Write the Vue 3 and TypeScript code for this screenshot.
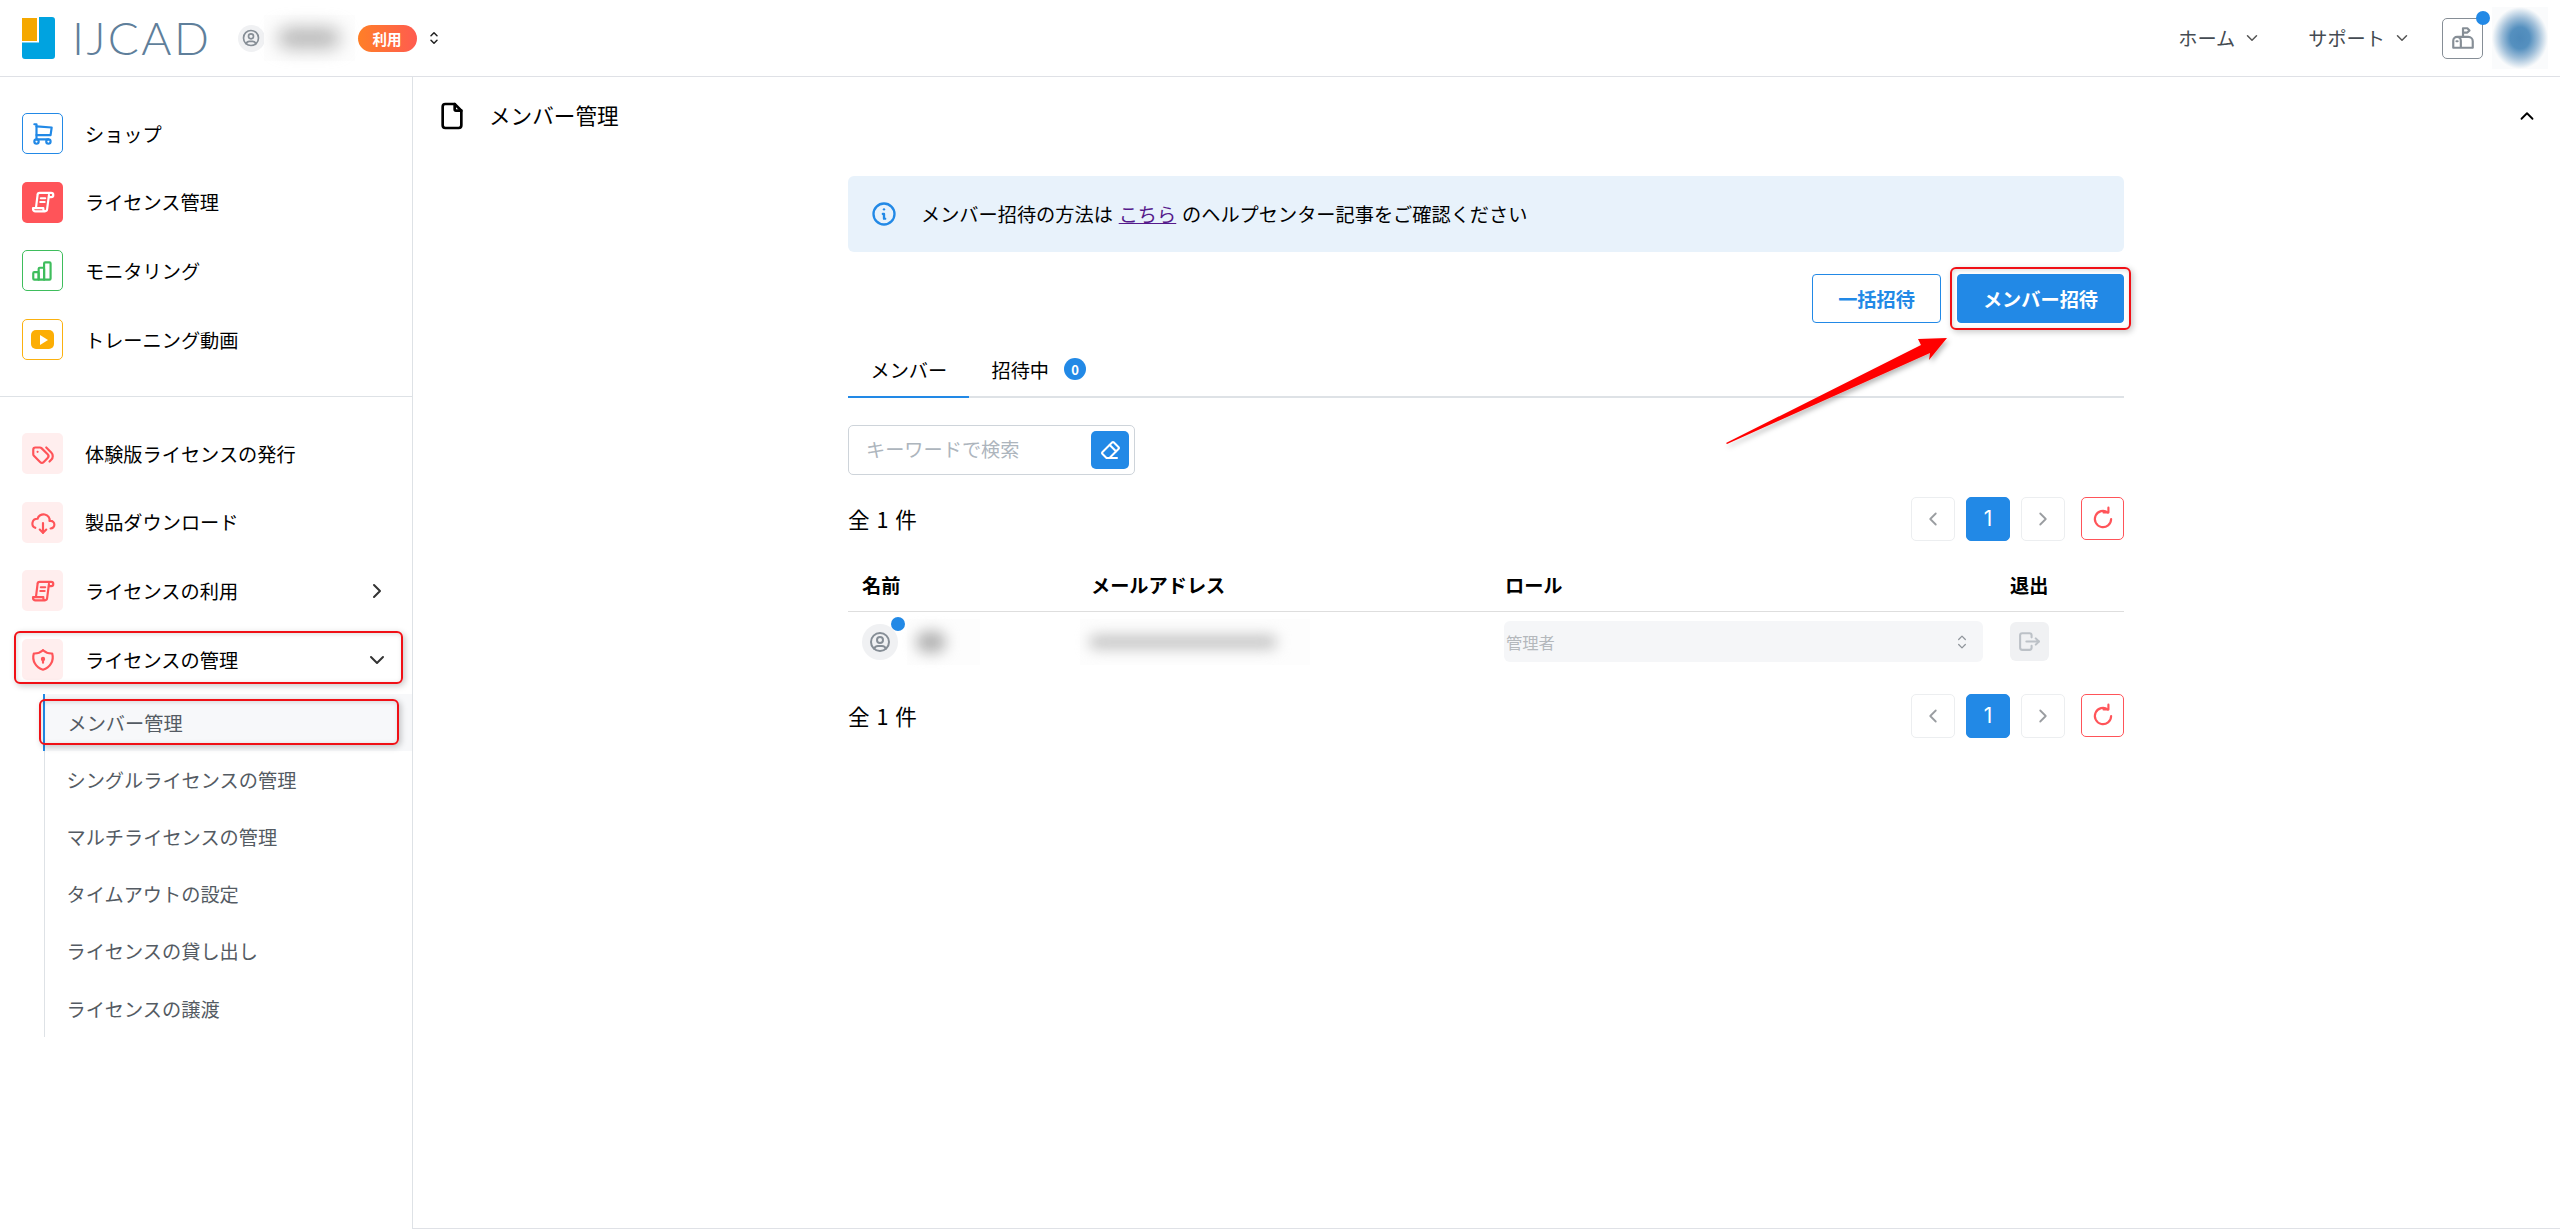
<script setup lang="ts">
type Icon = string[]
const I: Record<string, Icon> = {
  cart: ['M17 17h-11v-14h-2', 'M6 5l14 1l-1 7h-13', 'M4 19a2 2 0 1 0 4 0a2 2 0 1 0 -4 0', 'M15 19a2 2 0 1 0 4 0a2 2 0 1 0 -4 0'],
  scroll: ['M5.500 17.500L7 5.500a2 2 0 0 1 2-2H19.500a2 2 0 0 1 0 4H17.500', 'M17.500 5.500L15.800 18.500a2.200 2.200 0 0 1-2.200 2.100H5a2.200 2.200 0 0 1-2.200-2v-1h9.500v1.200a2 2 0 0 0 1.500 1.800', 'M10 8.500h4', 'M9.500 12h4'],
  bars: ['M3 14a1 1 0 0 1 1-1h3a1 1 0 0 1 1 1v6H4a1 1 0 0 1-1-1z', 'M8 20V10a1 1 0 0 1 1-1h3a1 1 0 0 1 1 1v10z', 'M13 20V5a1 1 0 0 1 1-1h4a1 1 0 0 1 1 1v14a1 1 0 0 1-1 1z'],
  tags: ['M3 8v4.172a2 2 0 0 0 .586 1.414l5.71 5.71a2.41 2.41 0 0 0 3.408 0l3.592 -3.592a2.41 2.41 0 0 0 0 -3.408l-5.71 -5.71a2 2 0 0 0 -1.414 -.586h-4.172a2 2 0 0 0 -2 2z', 'M18 19l1.592 -1.592a4.82 4.82 0 0 0 0 -6.816l-4.592 -4.592', 'M7 10h-.01'],
  cloud: ['M19 18a3.500 3.500 0 0 0 0 -7h-1a5 4.500 0 0 0 -11 -2a4.600 4.400 0 0 0 -2.100 8.400', 'M12 13l0 9', 'M9 19l3 3l3 -3'],
  shield: ['M12 3a12 12 0 0 0 8.500 3a12 12 0 0 1 -8.500 15a12 12 0 0 1 -8.500 -15a12 12 0 0 0 8.500 -3', 'M12 11m-1 0a1 1 0 1 0 2 0a1 1 0 1 0 -2 0', 'M12 12l0 2.500'],
  user: ['M3 12a9 9 0 1 0 18 0a9 9 0 1 0 -18 0', 'M9 10a3 3 0 1 0 6 0a3 3 0 1 0 -6 0', 'M6.168 18.849a4 4 0 0 1 3.832 -2.849h4a4 4 0 0 1 3.834 2.855'],
  selector: ['M8 9l4 -4l4 4', 'M16 15l-4 4l-4 -4'],
  down: ['M6 9l6 6l6 -6'],
  up: ['M6 15l6 -6l6 6'],
  left: ['M15 6l-6 6l6 6'],
  right: ['M9 6l6 6l-6 6'],
  mailbox: ['M10 21v-6.500a3.500 3.500 0 0 0 -7 0v6.500h18v-6a4 4 0 0 0 -4 -4h-10.500', 'M12 11v-8h4l2 2l-2 2h-4', 'M6 15h1'],
  file: ['M14 3v4a1 1 0 0 0 1 1h4', 'M17 21h-10a2 2 0 0 1 -2 -2v-14a2 2 0 0 1 2 -2h7l5 5v11a2 2 0 0 1 -2 2'],
  info: ['M3 12a9 9 0 1 0 18 0a9 9 0 1 0 -18 0', 'M12 8h.01', 'M11 12h1v4h1'],
  eraser: ['M19 20h-10.500l-4.210 -4.300a1 1 0 0 1 0 -1.410l10 -10a1 1 0 0 1 1.410 0l5 5a1 1 0 0 1 0 1.410l-9.200 9.300', 'M18 13.300l-6.300 -6.300'],
  refresh: ['M19.500 12a7.500 7.500 0 1 1 -3 -6', 'M17 1.500v4.500h-4.500'],
  logout: ['M14 8v-2a2 2 0 0 0 -2 -2h-7a2 2 0 0 0 -2 2v12a2 2 0 0 0 2 2h7a2 2 0 0 0 2 -2v-2', 'M9 12h12l-3 -3', 'M18 15l3 -3'],
}

const primaryMenu = [
  { label: 'ショップ', icon: I.cart, box: 'box-blue' },
  { label: 'ライセンス管理', icon: I.scroll, box: 'box-red' },
  { label: 'モニタリング', icon: I.bars, box: 'box-green' },
  { label: 'トレーニング動画', icon: null, box: 'box-yellow' },
]
const secondaryMenu = [
  { label: '体験版ライセンスの発行', icon: I.tags, arrow: null },
  { label: '製品ダウンロード', icon: I.cloud, arrow: null },
  { label: 'ライセンスの利用', icon: I.scroll, arrow: I.right },
  { label: 'ライセンスの管理', icon: I.shield, arrow: I.down },
]
const subMenu = ['メンバー管理', 'シングルライセンスの管理', 'マルチライセンスの管理', 'タイムアウトの設定', 'ライセンスの貸し出し', 'ライセンスの譲渡']
</script>

<template>
  <div class="page">
    <header class="topbar">
      <div class="brand">
        <svg class="logo-mark" viewBox="0 0 33 42" width="33" height="42">
          <path fill="#00a3e0" d="M17 0h13a3 3 0 0 1 3 3v36a3 3 0 0 1-3 3H3a3 3 0 0 1-3-3V25.500h17z" />
          <path fill="#f5a800" d="M0 1h15v23H0z" />
        </svg>
        <span class="logo-text">IJCAD</span>
      </div>
      <span class="round-user">
        <svg viewBox="0 0 24 24" width="20" height="20" class="ico"><path v-for="d in I.user" :key="d" :d="d" /></svg>
      </span>
      <span class="smudge-box head-name"><span class="smudge"></span></span>
      <span class="usage-badge">利用</span>
      <svg class="ico head-selector" viewBox="0 0 24 24" width="18" height="18"><path v-for="d in I.selector" :key="d" :d="d" /></svg>

      <nav class="top-right">
        <span class="top-link">ホーム<svg class="ico" viewBox="0 0 24 24" width="18" height="18"><path v-for="d in I.down" :key="d" :d="d" /></svg></span>
        <span class="top-link link-two">サポート<svg class="ico" viewBox="0 0 24 24" width="18" height="18"><path v-for="d in I.down" :key="d" :d="d" /></svg></span>
        <span class="mail-btn">
          <svg class="ico" viewBox="0 0 24 24" width="26" height="26"><path v-for="d in I.mailbox" :key="d" :d="d" /></svg>
          <i class="mail-dot"></i>
        </span>
        <span class="head-avatar"></span>
      </nav>
    </header>

    <div class="body">
      <aside class="sidebar">
        <div class="group group-one">
          <div v-for="m in primaryMenu" :key="m.label" class="menu-item">
            <span class="icon-box" :class="m.box">
              <svg v-if="m.icon" class="ico" viewBox="0 0 24 24" width="26" height="26"><path v-for="d in m.icon" :key="d" :d="d" /></svg>
              <span v-else class="play"><i></i></span>
            </span>
            <span>{{ m.label }}</span>
          </div>
        </div>
        <div class="group group-two">
          <div v-for="m in secondaryMenu" :key="m.label" class="menu-item">
            <span class="icon-box box-pale">
              <svg class="ico" viewBox="0 0 24 24" width="26" height="26"><path v-for="d in m.icon" :key="d" :d="d" /></svg>
            </span>
            <span>{{ m.label }}</span>
            <svg v-if="m.arrow" class="ico menu-arrow" viewBox="0 0 24 24" width="24" height="24"><path v-for="d in m.arrow" :key="d" :d="d" /></svg>
          </div>
        </div>
        <ul class="submenu">
          <li v-for="(s, i) in subMenu" :key="s" :class="{ active: i === 0 }">{{ s }}</li>
        </ul>
      </aside>

      <main class="main">
        <div class="title-row">
          <svg class="ico" viewBox="0 0 24 24" width="32" height="32"><path v-for="d in I.file" :key="d" :d="d" /></svg>
          <span class="title">メンバー管理</span>
          <svg class="ico title-chevron" viewBox="0 0 24 24" width="22" height="22"><path v-for="d in I.up" :key="d" :d="d" /></svg>
        </div>

        <section class="content">
          <div class="alert">
            <svg class="ico" viewBox="0 0 24 24" width="28" height="28"><path v-for="d in I.info" :key="d" :d="d" /></svg>
            <span class="alert-text">メンバー招待の方法は <a class="visited">こちら</a> のヘルプセンター記事をご確認ください</span>
          </div>

          <div class="actions">
            <button class="btn btn-outline">一括招待</button>
            <button class="btn btn-solid">メンバー招待</button>
          </div>

          <div class="tabs">
            <span class="tab tab-active">メンバー</span>
            <span class="tab">招待中<b class="count">0</b></span>
          </div>

          <div class="search">
            <span class="placeholder">キーワードで検索</span>
            <span class="search-btn">
              <svg class="ico" viewBox="0 0 24 24" width="24" height="24"><path v-for="d in I.eraser" :key="d" :d="d" /></svg>
            </span>
          </div>

          <div class="pager-row row-top">
            <span class="total">全 1 件</span>
            <div class="pager">
              <span class="page-btn"><svg class="ico" viewBox="0 0 24 24" width="22" height="22"><path v-for="d in I.left" :key="d" :d="d" /></svg></span>
              <span class="page-btn current">1</span>
              <span class="page-btn"><svg class="ico" viewBox="0 0 24 24" width="22" height="22"><path v-for="d in I.right" :key="d" :d="d" /></svg></span>
              <span class="reload"><svg class="ico" viewBox="0 0 24 24" width="26" height="26"><path v-for="d in I.refresh" :key="d" :d="d" /></svg></span>
            </div>
          </div>

          <div class="table">
            <div class="t-head">
              <span>名前</span><span>メールアドレス</span><span>ロール</span><span>退出</span>
            </div>
            <div class="t-row">
              <div class="cell-name">
                <span class="row-user">
                  <svg class="ico" viewBox="0 0 24 24" width="24" height="24"><path v-for="d in I.user" :key="d" :d="d" /></svg>
                  <i class="row-dot"></i>
                </span>
                <span class="smudge-box row-name"><span class="smudge"></span></span>
              </div>
              <div class="cell-mail"><span class="smudge-box row-mail"><span class="smudge"></span></span></div>
              <div class="cell-role">
                <div class="role-select">
                  <span>管理者</span>
                  <svg class="ico" viewBox="0 0 24 24" width="20" height="20"><path v-for="d in I.selector" :key="d" :d="d" /></svg>
                </div>
              </div>
              <div class="cell-exit">
                <span class="exit-btn"><svg class="ico" viewBox="0 0 24 24" width="25" height="25"><path v-for="d in I.logout" :key="d" :d="d" /></svg></span>
              </div>
            </div>
          </div>

          <div class="pager-row row-bottom">
            <span class="total">全 1 件</span>
            <div class="pager">
              <span class="page-btn"><svg class="ico" viewBox="0 0 24 24" width="22" height="22"><path v-for="d in I.left" :key="d" :d="d" /></svg></span>
              <span class="page-btn current">1</span>
              <span class="page-btn"><svg class="ico" viewBox="0 0 24 24" width="22" height="22"><path v-for="d in I.right" :key="d" :d="d" /></svg></span>
              <span class="reload"><svg class="ico" viewBox="0 0 24 24" width="26" height="26"><path v-for="d in I.refresh" :key="d" :d="d" /></svg></span>
            </div>
          </div>
        </section>
      </main>
    </div>

    <i class="mark mark-menu"></i>
    <i class="mark mark-sub"></i>
    <i class="mark mark-btn"></i>
    <svg class="arrow" viewBox="0 0 2560 1229" width="2560" height="1229">
      <defs>
        <filter id="arrow-shadow" x="-10%" y="-10%" width="130%" height="130%">
          <feDropShadow dx="2" dy="3" stdDeviation="2.500" flood-color="#000" flood-opacity="0.28" />
        </filter>
      </defs>
      <polygon fill="#ff0000" filter="url(#arrow-shadow)" points="1726,443 1921,345 1918,339 1947,338 1929,360 1930,353 1727,444" />
    </svg>
  </div>
</template>

<style>
html, body { margin: 0; background: #fff; }
</style>

<style scoped>
.page {
  position: relative;
  width: 2560px;
  height: 1229px;
  overflow: hidden;
  display: flex;
  flex-direction: column;
  font-family: "Noto Sans CJK JP", "Noto Sans", sans-serif;
  font-size: 19.2px;
  color: #000;
  background: #fff;
}
.ico { fill: none; stroke: currentColor; stroke-width: 2; stroke-linecap: round; stroke-linejoin: round; flex: none; display: block; }

.topbar {
  height: 77px;
  box-sizing: border-box;
  flex: none;
  display: flex;
  align-items: center;
  padding-left: 22px;
  border-bottom: 1px solid #dfe1e6;
}
.brand { width: 215.5px; display: flex; align-items: center; flex: none; }
.logo-mark { flex: none; }
.logo-text {
  margin-left: 17px;
  font-family: Lato, "Open Sans", sans-serif;
  font-weight: 300;
  font-size: 46px;
  line-height: 1;
  letter-spacing: 2.4px;
  color: #5f7f9b;
}
.round-user {
  width: 27px; height: 27px; border-radius: 50%;
  background: #f0f1f3; color: #868e96;
  display: flex; align-items: center; justify-content: center; flex: none;
}
.smudge-box { display: flex; align-items: center; justify-content: center; background: #fdfdfd; flex: none; }
.smudge { display: block; background: #b4b4b4; border-radius: 14px; filter: blur(9px); }
.head-name { width: 91px; height: 46px; margin-left: -1px; margin-right: 3px; }
.head-name .smudge { width: 62px; height: 20px; }
.usage-badge {
  width: 59px; height: 27px; border-radius: 14px;
  background: linear-gradient(90deg, #ff7f27, #ff5b50);
  color: #fff; font-weight: 700; font-size: 14.5px;
  display: flex; align-items: center; justify-content: center; flex: none;
}
.head-selector { margin-left: 8px; color: #222; }

.top-right { margin-left: auto; display: flex; align-items: center; padding-right: 12px; }
.top-link { display: flex; align-items: center; gap: 8px; font-size: 19.2px; color: #444b52; }
.top-link .ico { color: #555; }
.link-two { margin-left: 47px; }
.mail-btn {
  position: relative; width: 41px; height: 41px; box-sizing: border-box;
  margin-left: 31px; border: 1px solid #868e96; border-radius: 5px; color: #868e96;
  display: flex; align-items: center; justify-content: center;
}
.mail-dot { position: absolute; right: -8px; top: -8px; width: 14px; height: 14px; border-radius: 50%; background: #2289e6; }
.head-avatar {
  width: 56px; height: 62px; margin-left: 9px;
  background: radial-gradient(ellipse closest-side, #4d89ba 0, #5590bf 35%, #9dbdd8 65%, #eef3f7 95%, #fafbfc 100%);
}

.body { flex: 1; display: flex; min-height: 0; }
.sidebar { width: 413px; box-sizing: border-box; flex: none; border-right: 1px solid #dee2e6; }
.group { display: flex; flex-direction: column; gap: 27.7px; padding: 36px 23px 0 22px; }
.group-one { padding-bottom: 36px; border-bottom: 1px solid #dee2e6; }
.menu-item { display: flex; align-items: center; gap: 22px; height: 41px; }
.icon-box {
  width: 41px; height: 41px; box-sizing: border-box; border-radius: 5px; flex: none;
  display: flex; align-items: center; justify-content: center;
}
.box-blue { border: 1px solid #2289e6; color: #2289e6; }
.box-red { background: #ff5459; color: #fff; }
.box-green { border: 1px solid #3ebd5c; color: #3ebd5c; }
.box-yellow { border: 1px solid #fbb10f; }
.box-pale { background: #ffeeee; color: #ff5459; }
.play {
  width: 23px; height: 19px; border-radius: 5px; background: #fcae05;
  display: flex; align-items: center; justify-content: center;
}
.play i { width: 0; height: 0; border-left: 8px solid #fff; border-top: 5px solid transparent; border-bottom: 5px solid transparent; margin-left: 2px; }
.menu-arrow { margin-left: auto; color: #333; }

.submenu { list-style: none; margin: 14px 0 0 44px; padding: 0; border-left: 1px solid #dee2e6; color: #545b63; }
.submenu li { height: 57.2px; display: flex; align-items: center; padding-left: 21.5px; box-sizing: border-box; }
.submenu li.active { background: #f7f8fa; box-shadow: -1px 0 0 #2289e6; border-left: 1px solid #2289e6; margin-left: -1px; padding-left: 22.5px; }

.main { flex: 1; min-width: 0; box-sizing: border-box; border-bottom: 1px solid #dfe1e6; padding-right: 1px; }
.title-row { height: 77px; display: flex; align-items: center; padding: 0 22px 0 23px; box-sizing: border-box; color: #000; }
.title { margin-left: 21px; margin-top: -2px; font-size: 21.6px; }
.title-chevron { margin-left: auto; margin-right: -1px; }

.content { width: 1276px; margin: 22px auto 0; }
.alert {
  height: 76px; box-sizing: border-box; padding-left: 22px;
  display: flex; align-items: center; gap: 23px;
  background: #e8f2fb; border-radius: 6px; color: #000;
}
.alert .ico { color: #2289e6; }
.alert-text { word-spacing: 1.5px; }
.visited { color: #551a8b; text-decoration: underline; }
.actions { display: flex; justify-content: flex-end; gap: 16px; margin-top: 22px; }
.btn {
  height: 49px; box-sizing: border-box; border-radius: 4px; font: inherit; font-weight: 700;
  padding: 0; display: flex; align-items: center; justify-content: center;
}
.btn-outline { width: 129px; background: #fff; color: #2289e6; border: 1px solid #2289e6; }
.btn-solid { width: 167px; background: #2289e6; color: #fff; border: 1px solid #2289e6; }

.tabs { display: flex; margin-top: 21px; height: 51.5px; border-bottom: 2px solid #dee2e6; box-sizing: content-box; }
.tab { display: flex; align-items: center; padding: 0 22.500px; white-space: nowrap; }
.tab-active { position: relative; width: 76px; box-sizing: content-box; }
.tab-active::after { content: ""; position: absolute; left: 0; right: 0; bottom: -2px; height: 2px; background: #2289e6; }
.count {
  width: 22px; height: 22px; border-radius: 50%; margin-left: 15px; margin-top: -1px;
  background: #2289e6; color: #fff; font-size: 13px; font-weight: 700;
  display: flex; align-items: center; justify-content: center;
}
.search {
  width: 287px; height: 50px; box-sizing: border-box; margin-top: 27px;
  border: 1px solid #ced4da; border-radius: 5px; padding: 0 5px 2px 17px;
  display: flex; align-items: center; justify-content: space-between;
}
.placeholder { color: #adb5bd; }
.search-btn {
  width: 38px; height: 38px; border-radius: 5px; background: #2289e6; color: #fff; margin-bottom: -2px;
  display: flex; align-items: center; justify-content: center;
}
.pager-row { display: flex; align-items: center; justify-content: space-between; }
.row-top { margin-top: 22px; }
.row-bottom { margin-top: 22px; }
.total { font-size: 21.6px; color: #000; word-spacing: 2px; }
.pager { display: flex; align-items: center; gap: 11px; }
.page-btn {
  width: 44px; height: 44px; box-sizing: border-box; border: 1px solid #eceef0; border-radius: 5px; color: #9a9da1;
  display: flex; align-items: center; justify-content: center;
}
.page-btn.current { background: #2289e6; border-color: #2289e6; color: #fff; font-size: 21px; font-family: Inter, sans-serif; }
.reload {
  width: 43px; height: 43px; box-sizing: border-box; margin-left: 5px; border: 1px solid #ff5459; border-radius: 5px; color: #ff5459;
  display: flex; align-items: center; justify-content: center;
}

.table { margin-top: 22px; }
.t-head, .t-row { display: grid; grid-template-columns: 229px 414px 505px 128px; }
.t-head { height: 49px; box-sizing: border-box; border-bottom: 1px solid #dedede; padding-bottom: 3px; font-weight: 700; color: #000; align-items: center; }
.t-head span { padding: 0 14px; }
.t-row { height: 60px; align-items: center; }
.cell-name { display: flex; align-items: center; padding-left: 14px; }
.row-user {
  position: relative; width: 36px; height: 36px; border-radius: 50%; background: #f0f1f3; color: #868e96;
  display: flex; align-items: center; justify-content: center; flex: none;
}
.row-dot { position: absolute; right: -7px; top: -7px; width: 14px; height: 14px; border-radius: 50%; background: #2289e6; }
.row-name { width: 73px; height: 46px; margin-left: 9px; justify-content: flex-start; padding-left: 9px; box-sizing: border-box; }
.row-name .smudge { width: 30px; height: 22px; filter: blur(7px); }
.cell-mail { padding-left: 3px; }
.row-mail { width: 230px; height: 46px; justify-content: flex-start; padding-left: 9px; box-sizing: border-box; }
.row-mail .smudge { width: 188px; height: 14px; background: #c4c4c4; filter: blur(7px); }
.cell-role { padding-left: 13px; padding-right: 13px; }
.role-select {
  height: 41px; box-sizing: border-box; border-radius: 6px; background: #f5f6f8; color: #b4b8bc;
  display: flex; align-items: center; justify-content: space-between; padding: 0 11px 0 2px; font-size: 16.3px;
}
.role-select .ico { color: #8f959b; stroke-width: 1.5; }
.cell-exit { padding-left: 14px; }
.exit-btn {
  width: 39px; height: 39px; border-radius: 6px; background: #f0f1f3; color: #bcc1c7;
  display: flex; align-items: center; justify-content: center;
}

.mark {
  position: absolute; box-sizing: border-box; border: 2px solid #f01016; border-radius: 6px;
  box-shadow: 2px 2px 6px rgba(0, 0, 0, .22), inset 1px 1px 5px rgba(0, 0, 0, .14);
}
.mark-menu { left: 14px; top: 631px; width: 389px; height: 53px; }
.mark-sub { left: 39px; top: 699px; width: 360px; height: 46px; }
.mark-btn { left: 1950px; top: 267px; width: 181px; height: 63px; }
.arrow { position: absolute; left: 0; top: 0; pointer-events: none; }
</style>
